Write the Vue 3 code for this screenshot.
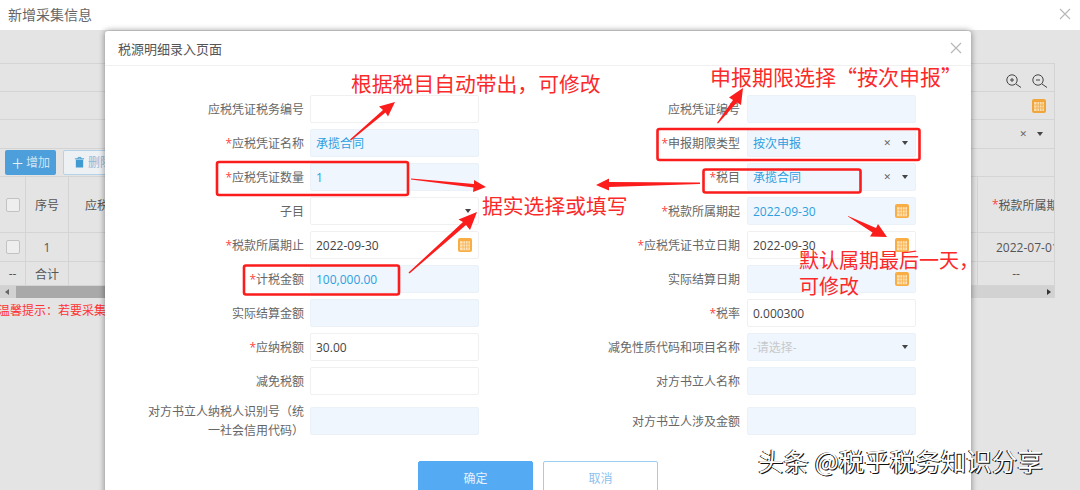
<script setup>
const leftRows = [
  { label: '应税凭证税务编号' },
  { label: '应税凭证名称', req: true, value: '承揽合同', tone: 'blue' },
  { label: '应税凭证数量', req: true, value: '1', tone: 'blue' },
  { label: '子目', caret: true },
  { label: '税款所属期止', req: true, value: '2022-09-30', cal: true },
  { label: '计税金额', req: true, value: '100,000.00', tone: 'blue' },
  { label: '实际结算金额', tone: 'blue' },
  { label: '应纳税额', req: true, value: '30.00' },
  { label: '减免税额' },
  { label: '对方书立人纳税人识别号（统一社会信用代码）', tone: 'blue', tall: true },
]
const rightRows = [
  { label: '应税凭证编号', tone: 'blue' },
  { label: '申报期限类型', req: true, value: '按次申报', tone: 'blue', clear: true, caret: true },
  { label: '税目', req: true, value: '承揽合同', tone: 'blue', clear: true, caret: true },
  { label: '税款所属期起', req: true, value: '2022-09-30', tone: 'blue', cal: true },
  { label: '应税凭证书立日期', req: true, value: '2022-09-30', cal: true },
  { label: '实际结算日期', tone: 'blue', cal: true },
  { label: '税率', req: true, value: '0.000300' },
  { label: '减免性质代码和项目名称', value: '-请选择-', tone: 'blue', placeholder: true, caret: true },
  { label: '对方书立人名称', tone: 'blue' },
  { label: '对方书立人涉及金额', tone: 'blue', tall: true },
]
const rows = leftRows.flatMap((row, i) => [row, rightRows[i]])
const grid = [0, 1, 2, 3]
</script>

<template>
  <div class="page">
    <header class="top">
      <span>新增采集信息</span>
      <svg class="close-big" viewBox="0 0 12 12"><path d="M1 1l10 10M11 1L1 11" /></svg>
    </header>

    <main class="back">
      <section class="panel">
        <div class="band">
          <svg class="mag" viewBox="0 0 17 17"><circle cx="7" cy="7" r="5.2" /><path d="M11 11l5 3.5M7 5v4M5 7h4" /></svg>
          <svg class="mag" viewBox="0 0 17 17"><circle cx="7" cy="7" r="5.2" /><path d="M11 11l5 3.5M5 7h4" /></svg>
        </div>
        <div class="band short">
          <svg class="cal" viewBox="0 0 14 14"><rect width="14" height="14" rx="2" fill="#f0a63c" /><rect x="2" y="3" width="10" height="9" fill="#fbdca8" /><path d="M5 3v9M7.5 3v9M10 3v9M2 6h10M2 9h10" stroke="#f0a63c" stroke-width=".7" /></svg>
        </div>
        <div class="band short marks">
          <span class="x">✕</span><span class="tri"></span>
        </div>
        <div class="tools">
          <button class="add"><b>＋</b>增加</button>
          <button class="del">
            <svg viewBox="0 0 12 12"><path d="M1 2.5h10M4.5 2.5V1h3v1.5" stroke="#3f9bd1" fill="none" /><path d="M2 3.5h8V12H2z" fill="#3f9bd1" /></svg>
            删除
          </button>
        </div>
        <div class="thead">
          <span class="c0"><i class="check"></i></span>
          <span class="c1">序号</span>
          <span class="c2">应税凭证</span>
          <span class="c3"><em>*</em>税款所属期止</span>
        </div>
        <div class="tbody">
          <span class="c0"><i class="check"></i></span>
          <span class="c1">1</span>
          <span class="c2"></span>
          <span class="c3">2022-07-01</span>
        </div>
        <div class="tfoot">
          <span class="c0">--</span>
          <span class="c1">合计</span>
          <span class="c2"></span>
          <span class="c3">--</span>
        </div>
        <div class="scroll">
          <span class="lt"></span>
          <span class="thumb"></span>
          <span class="rt"></span>
        </div>
      </section>
      <p class="tip">温馨提示：若要采集</p>
    </main>

    <section class="dialog">
      <header class="dlg-head">
        <span>税源明细录入页面</span>
        <svg class="close" viewBox="0 0 12 12"><path d="M1 1l10 10M11 1L1 11" /></svg>
      </header>
      <div class="form">
        <div v-for="row in rows" :key="row.label" class="field" :class="{ tall: row.tall }">
          <label><em v-if="row.req">*</em>{{ row.label }}</label>
          <div class="input" :class="[row.tone, { ph: row.placeholder }]">
            <span>{{ row.value }}</span>
            <span class="x" v-if="row.clear">✕</span>
            <span class="tri" v-if="row.caret"></span>
            <svg v-if="row.cal" class="cal" viewBox="0 0 14 14"><rect width="14" height="14" rx="2" fill="#f9ae45" /><rect x="2" y="3.2" width="10" height="9" fill="#fde3bb" /><path d="M5 3v9M7.5 3v9M10 3v9M2 6h10M2 9h10" stroke="#f9ae45" stroke-width=".7" /></svg>
          </div>
        </div>
      </div>
      <footer class="actions">
        <button class="ok">确定</button>
        <button class="cancel">取消</button>
      </footer>
    </section>

    <svg class="marks-layer" viewBox="0 0 1080 490">
      <g fill="none" stroke="#fb1c1c" stroke-width="2.6">
        <rect x="217" y="162" width="191" height="33" rx="2" />
        <rect x="244" y="265.500" width="155" height="29" rx="2" />
        <rect x="657.500" y="129" width="262" height="31" rx="2" />
        <rect x="703.500" y="169.500" width="157" height="23" rx="2" />
      </g>
      <g fill="#fb1c1c">
        <path d="M350 139.500 L383 110 L379 106.500 L395 102 L388 116.500 L385.500 112.500 L351 140.500Z" />
        <path d="M411 178.500 L474 184 L474 180 L486 187 L473 192 L473.500 187.500 L411 179.500Z" />
        <path d="M700 182.500 L609 182 L609 178.500 L596 185 L609 190.500 L609 187 L700 184Z" />
        <path d="M408.500 272.500 L463 222 L458.500 219.500 L477 212 L470 230 L466 225 L409.500 273.500Z" />
        <path d="M717 123 L733 100 L729 97.500 L743 88 L741 105 L737 102.500 L718 123.500Z" />
        <path d="M848 216 L876 228 L878 224 L887 237 L870 236.500 L872.500 232.500 L848 216.500Z" />
      </g>
    </svg>

    <div class="note n1">根据税目自动带出，可修改</div>
    <div class="note n2">申报期限选择“按次申报”</div>
    <div class="note n3">据实选择或填写</div>
    <div class="note n4">默认属期最后一天，<br />可修改</div>
    <div class="brand">头条 @税乎税务知识分享</div>
  </div>
</template>

<style>
html, body { margin: 0; background: #fff; overflow: hidden; }
</style>

<style scoped>
.page {
  position: relative;
  width: 1080px;
  height: 490px;
  overflow: hidden;
  display: flex;
  flex-direction: column;
  font-family: "Open Sans", "Noto Sans CJK SC", sans-serif;
  font-size: 12px;
  color: #555;
}
.top {
  height: 30px;
  flex: none;
  display: flex;
  align-items: center;
  justify-content: space-between;
  padding: 0 9px 3px 8px;
  box-sizing: border-box;
  font-size: 14px;
  color: #666;
  background: #fff;
}
.close-big { width: 12px; height: 12px; }
.close-big path, .close path { stroke: #b8b8b8; stroke-width: 1.2; fill: none; }
.back {
  flex: 1;
  background: #e4e4e4;
  padding-top: 33px;
}
.panel {
  width: 1055px;
  box-sizing: border-box;
  border-top: 1px solid #d4d4d4;
  border-right: 1px solid #d4d4d4;
}
.band {
  height: 28px;
  border-bottom: 1px solid #d4d4d4;
  display: flex;
  justify-content: flex-end;
  align-items: flex-end;
  gap: 9px;
  padding: 0 6px 0 0;
  box-sizing: border-box;
}
.band .mag { width: 17px; height: 17px; margin-bottom: 1px; }
.mag circle, .mag path { fill: none; stroke: #444; stroke-width: 1; }
.band.short { align-items: center; height: 28px; padding-right: 8px; }
.band.short .cal { width: 14px; height: 14px; }
.band.marks { height: 29px; gap: 8px; padding-right: 9px; }
.tools {
  height: 28px;
  border-bottom: 1px solid #d4d4d4;
  box-sizing: border-box;
  display: flex;
  align-items: center;
  gap: 7px;
  padding: 0 0 1px 5px;
}
.tools button {
  height: 25px;
  border-radius: 2px;
  font: inherit;
  padding: 0;
  display: flex;
  align-items: center;
  justify-content: center;
}
.add { width: 51px; background: #4c9fda; border: 0; color: #cfe4f3; gap: 2px; }
.add b { color: #e6f1f8; font-size: 13px; font-weight: 400; }
.del { width: 60px; background: #eef1f4; border: 1px solid #b5d3e8; color: #8db9da; gap: 3px; }
.del svg { width: 11px; height: 12px; }
.thead, .tbody, .tfoot {
  display: grid;
  grid-template-columns: 26px 43px 909px 76px;
  border-bottom: 1px solid #d4d4d4;
  box-sizing: border-box;
  text-align: center;
}
.thead { height: 56px; }
.tbody { height: 29px; }
.tfoot { height: 24px; }
.thead span, .tbody span, .tfoot span {
  display: flex;
  align-items: center;
  justify-content: center;
  border-right: 1px solid #d4d4d4;
  white-space: nowrap;
  overflow: hidden;
}
.thead .c2 { justify-content: flex-start; padding-left: 16px; }
.thead .c3, .tbody .c3 { border-right: 0; justify-content: flex-start; padding-left: 14px; }
.tbody .c3 { padding-left: 18px; }
.tfoot .c3 { border-right: 0; }
.check {
  width: 12px;
  height: 12px;
  display: block;
  border: 1px solid #c2c2c2;
  border-radius: 2px;
  background: #eee;
}
em { color: #f44; font-style: normal; }
.scroll {
  height: 12px;
  display: flex;
  align-items: center;
  background: #d2d2d2;
}
.scroll .thumb { flex: 1; height: 12px; background: #a9a9a9; margin-left: 7px; margin-right: 90px; }
.scroll .lt, .scroll .rt { width: 0; height: 0; border-top: 3.500px solid transparent; border-bottom: 3.500px solid transparent; }
.scroll .lt { margin-left: 5px; border-right: 4px solid #666; }
.scroll .rt { margin-right: 3px; border-left: 4px solid #333; }
.tip { margin: 3px 0 0; color: #f33; line-height: 20px; margin-left: -2px; }

.dialog {
  position: absolute;
  left: 105px;
  top: 31px;
  width: 866px;
  height: 480px;
  background: #fff;
  border-radius: 3px 3px 0 0;
  box-shadow: 0 0 6px rgba(0, 0, 0, .45);
}
.dlg-head {
  height: 35px;
  box-sizing: border-box;
  border-bottom: 1px solid #f0f0f0;
  display: flex;
  align-items: center;
  justify-content: space-between;
  padding: 0 9px 0 13px;
  font-size: 13px;
  color: #555;
}
.close { width: 12px; height: 12px; }
.form {
  padding-top: 29px;
  display: grid;
  grid-template-columns: 436px 430px;
  row-gap: 6px;
}
.field {
  display: grid;
  grid-template-columns: 199px 169px;
  column-gap: 6px;
  align-items: center;
  height: 28px;
}
.field:nth-child(even) { column-gap: 7px; }
.field.tall { height: 40px; }
label {
  text-align: right;
  line-height: 19px;
  color: #666;
}
.field.tall label { padding-left: 36px; }
.input {
  height: 28px;
  box-sizing: border-box;
  border: 1px solid #f0f0f0;
  border-radius: 2px;
  background: #fff;
  display: flex;
  align-items: center;
  gap: 9px;
  padding: 0 5px 0 5px;
  color: #444;
  font-size: 12px;
}
.input > span:first-child { flex: 1; }
.input.blue { background: #f0f6fd; border-color: #ebf1f8; color: #2d9fe0; }
.input.ph { color: #c6c9cc; }
.input .cal { width: 14px; height: 14px; margin-right: 1px; }
.x { font-size: 9px; color: #666; line-height: 1; font-weight: 700; font-family: "DejaVu Sans", sans-serif; }
.tri {
  width: 0;
  height: 0;
  margin: 0 2px;
  border-left: 3.500px solid transparent;
  border-right: 3.500px solid transparent;
  border-top: 4px solid #444;
}
.actions {
  margin-top: 20px;
  display: flex;
  justify-content: center;
  gap: 10px;
}
.actions button {
  width: 115px;
  height: 34px;
  border-radius: 2px;
  font: inherit;
  box-sizing: border-box;
}
.ok { background: #54abf3; border: 1px solid #54abf3; color: #e6f2fc; }
.cancel { background: #fff; border: 1px solid #9ccdf3; color: #8cc2ee; }

.marks-layer {
  position: absolute;
  left: 0;
  top: 0;
  width: 1080px;
  height: 490px;
  pointer-events: none;
}
.note {
  position: absolute;
  color: #fb2a2a;
  font-family: "Noto Sans CJK SC", sans-serif;
  font-size: 20.800px;
  line-height: 26px;
  white-space: nowrap;
}
.n1 { left: 351px; top: 70px; }
.n2 { left: 710px; top: 63px; font-size: 21px; }
.n3 { left: 482px; top: 192px; }
.n4 { left: 799px; top: 247px; font-size: 20px; }
.brand {
  position: absolute;
  left: 758px;
  top: 444px;
  font-family: "Noto Sans CJK SC", sans-serif;
  font-size: 25.500px;
  line-height: 32px;
  color: #fff;
  white-space: nowrap;
  text-shadow: 1px 1px 0 #111, -1px 0 0 #111;
}
</style>
